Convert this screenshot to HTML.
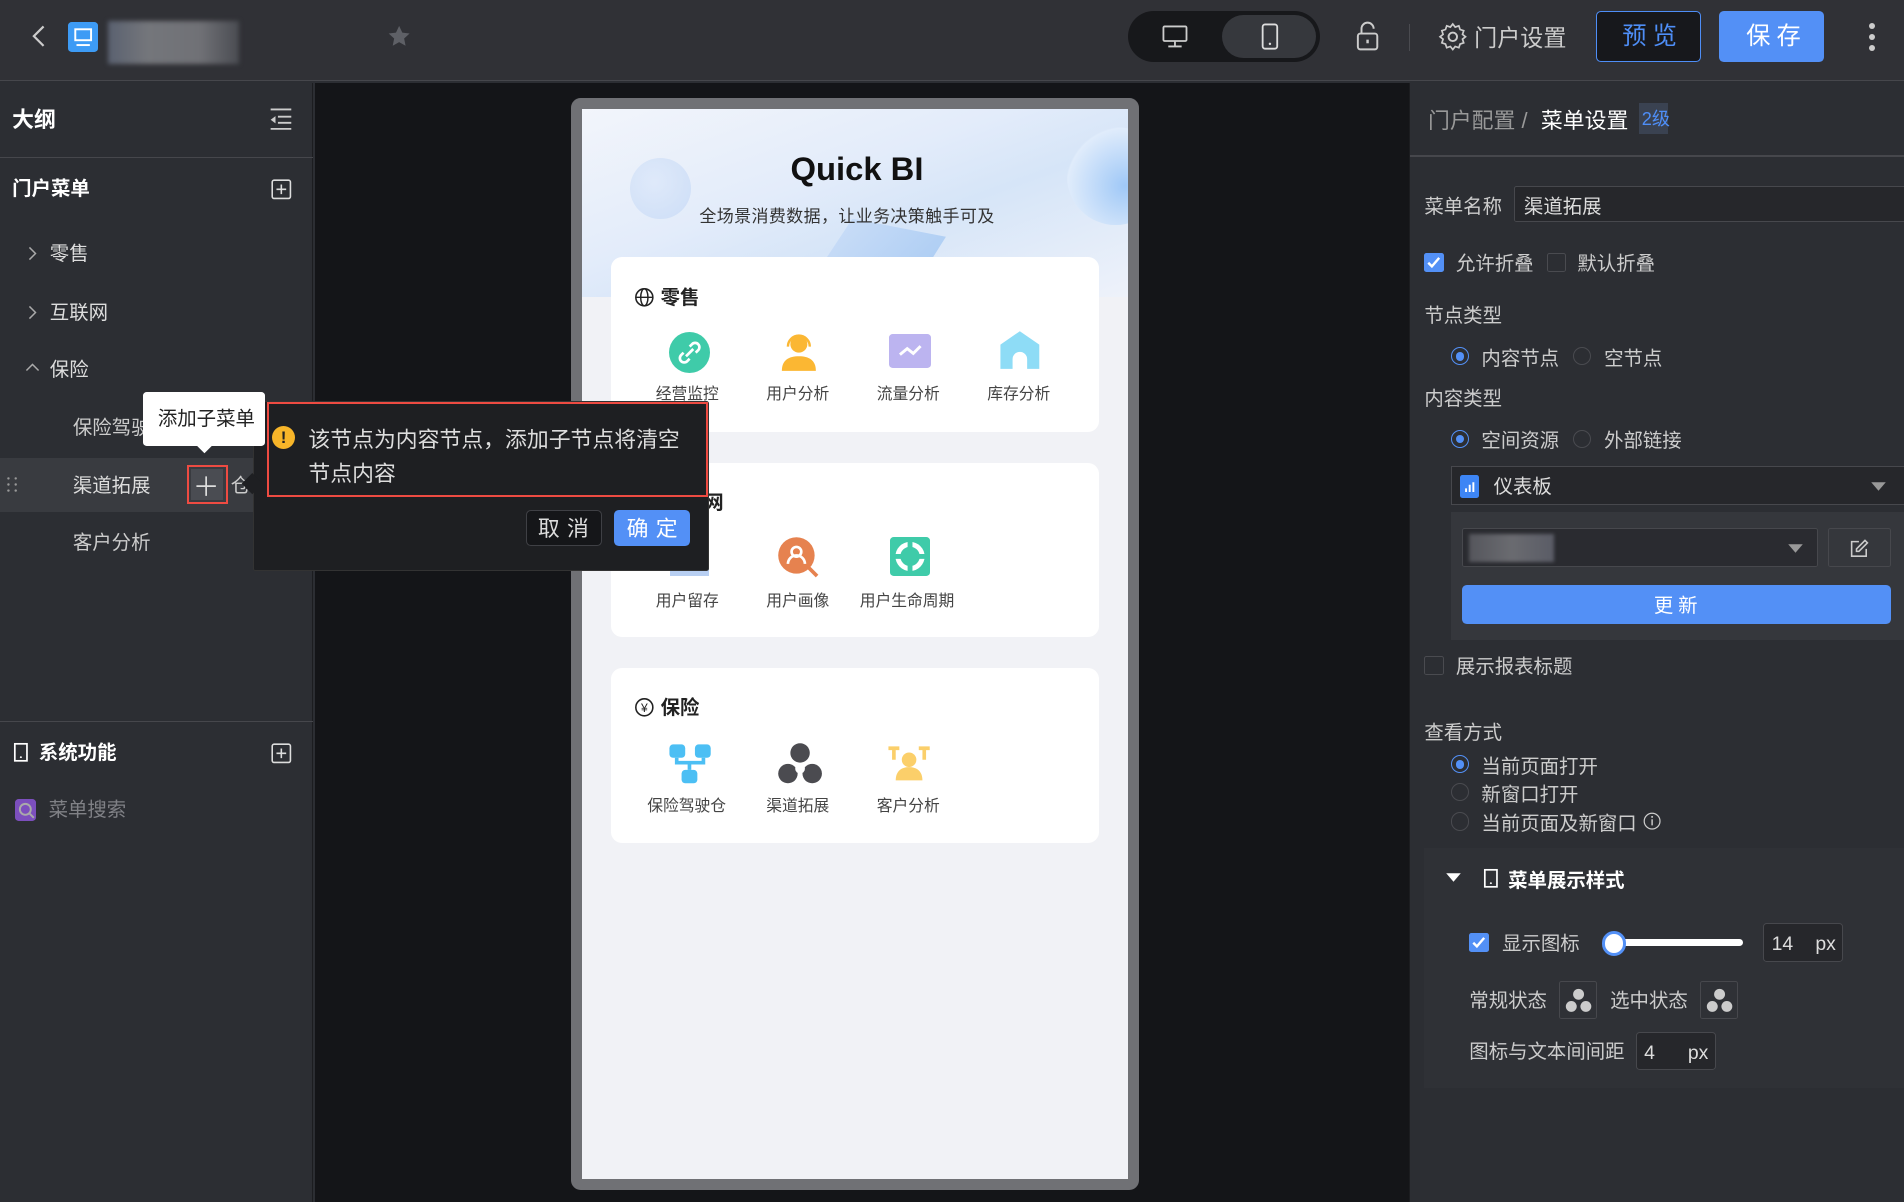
<!DOCTYPE html>
<html><head><meta charset="utf-8"><style>
*{box-sizing:border-box;margin:0;padding:0}
html,body{width:1904px;height:1202px;overflow:hidden;background:#2c2e33}
#r{zoom:1.214286;position:relative;width:1568px;height:990px;font-family:"Liberation Sans","Noto Sans CJK SC",sans-serif;color:#d8d9dc;font-size:15px}
.a{position:absolute}
.t{position:absolute;white-space:nowrap;line-height:1;margin-top:2px}
.ico{position:absolute}
</style></head><body><div id="r">
<!-- top bar -->
<div class="a" style="left:0;top:0;width:1568px;height:67px;background:#303136;border-bottom:1px solid #46474c"></div>
<svg class="ico" style="left:24px;top:20px" width="16" height="20"><path d="M12 2 L4 10 L12 18" stroke="#ccc" stroke-width="1.8" fill="none"/></svg>
<div class="a" style="left:56px;top:18px;width:25px;height:25px;background:#3d9bf5;border-radius:3px"></div>
<svg class="ico" style="left:56px;top:18px" width="25" height="25"><rect x="6" y="6" width="13" height="9" stroke="#fff" stroke-width="1.6" fill="none"/><path d="M7 19H18" stroke="#fff" stroke-width="1.6"/></svg>
<div class="a" style="left:89px;top:17px;width:108px;height:36px;background:linear-gradient(90deg,#5a6170,#74767b 30%,#707176 70%,#4a4c52);filter:blur(2px)"></div>
<svg class="ico" style="left:319px;top:20px" width="20" height="20"><path d="M10 1.5l2.6 5.6 6 .7-4.5 4.1 1.2 6-5.3-3-5.3 3 1.2-6L1.4 7.8l6-.7z" fill="#5e6066"/></svg>
<div class="a" style="left:929px;top:9px;width:158px;height:42px;background:#17181b;border-radius:21px"></div>
<div class="a" style="left:1006px;top:12px;width:78px;height:36px;background:#36383d;border-radius:18px"></div>
<svg class="ico" style="left:956px;top:20px" width="24" height="20"><rect x="2" y="2" width="19" height="12" rx="1" stroke="#ccc" stroke-width="1.5" fill="none"/><path d="M11.5 14v4M6 18.5h11" stroke="#ccc" stroke-width="1.5"/></svg>
<svg class="ico" style="left:1037px;top:18px" width="20" height="24"><rect x="3" y="2" width="12" height="20" rx="2" stroke="#ddd" stroke-width="1.5" fill="none"/><circle cx="9" cy="18" r="1" fill="#ddd"/></svg>
<svg class="ico" style="left:1114px;top:16px" width="24" height="28"><path d="M7 12V8a5 5 0 0 1 10 0" stroke="#ccc" stroke-width="1.6" fill="none"/><rect x="4" y="12" width="16" height="13" rx="2" stroke="#ccc" stroke-width="1.6" fill="none"/><path d="M12 17v3" stroke="#ccc" stroke-width="2"/></svg>
<div class="a" style="left:1160px;top:20px;width:1px;height:22px;background:#4a4b50"></div>
<svg class="ico" style="left:1183px;top:17px" width="26" height="26"><circle cx="13" cy="13" r="3.5" stroke="#ccc" stroke-width="1.6" fill="none"/><path d="M13 2.5l2 2.5 3-1 1 3 3 1-1 3 2.5 2-2.5 2 1 3-3 1-1 3-3-1-2 2.5-2-2.5-3 1-1-3-3-1 1-3L2.5 13 5 11 4 8l3-1 1-3 3 1z" stroke="#ccc" stroke-width="1.4" fill="none"/></svg>
<div class="t" style="left:1214px;top:20px;font-size:19px;color:#ccc">门户设置</div>
<div class="a" style="left:1314px;top:9px;width:87px;height:42px;border:1px solid #4e8ef7;border-radius:4px;background:#17181c"></div>
<div class="t" style="left:1336px;top:19px;font-size:20px;color:#4e8ef7;letter-spacing:5px">预览</div>
<div class="a" style="left:1416px;top:9px;width:86px;height:42px;background:#5390f6;border-radius:4px"></div>
<div class="t" style="left:1438px;top:19px;font-size:20px;color:#fff;letter-spacing:5px">保存</div>
<div class="a" style="left:1539px;top:19px;width:5px;height:5px;border-radius:50%;background:#ccc"></div>
<div class="a" style="left:1539px;top:28px;width:5px;height:5px;border-radius:50%;background:#ccc"></div>
<div class="a" style="left:1539px;top:37px;width:5px;height:5px;border-radius:50%;background:#ccc"></div>

<!-- left panel -->
<div class="a" style="left:0;top:68px;width:258px;height:922px;background:#2c2e33;border-right:1px solid #1c1d20"></div>
<div class="t" style="left:10px;top:88px;font-size:18px;font-weight:bold;color:#fff">大纲</div>
<svg class="ico" style="left:220px;top:88px" width="22" height="20"><path d="M3 2h17M9 8h11M9 13h11M3 18h17" stroke="#ccc" stroke-width="1.5"/><path d="M7 7.5l-4 3 4 3z" fill="#ccc"/></svg>
<div class="a" style="left:0;top:129px;width:258px;height:1px;background:#46474c"></div>
<div class="t" style="left:10px;top:146px;font-size:16px;font-weight:bold;color:#fff">门户菜单</div>
<svg class="ico" style="left:223px;top:147px" width="18" height="18"><rect x="1" y="1" width="15" height="15" rx="1.5" stroke="#ddd" stroke-width="1.3" fill="none"/><path d="M8.5 4.5v8M4.5 8.5h8" stroke="#ddd" stroke-width="1.3"/></svg>
<svg class="ico" style="left:22px;top:202px" width="10" height="14"><path d="M2 2l5 5-5 5" stroke="#aaa" stroke-width="1.2" fill="none"/></svg>
<div class="t" style="left:41px;top:200px;font-size:16px;color:#ddd">零售</div>
<svg class="ico" style="left:22px;top:250px" width="10" height="14"><path d="M2 2l5 5-5 5" stroke="#aaa" stroke-width="1.2" fill="none"/></svg>
<div class="t" style="left:41px;top:248px;font-size:16px;color:#ddd">互联网</div>
<svg class="ico" style="left:20px;top:298px" width="14" height="10"><path d="M2 7l5-5 5 5" stroke="#aaa" stroke-width="1.2" fill="none"/></svg>
<div class="t" style="left:41px;top:295px;font-size:16px;color:#ddd">保险</div>
<div class="t" style="left:60px;top:343px;font-size:16px;color:#ccc">保险驾驶舱</div>
<div class="a" style="left:0;top:377px;width:258px;height:45px;background:#393b40"></div>
<svg class="ico" style="left:5px;top:392px" width="12" height="14"><g fill="#999"><circle cx="2" cy="2" r="1"/><circle cx="8" cy="2" r="1"/><circle cx="2" cy="7" r="1"/><circle cx="8" cy="7" r="1"/><circle cx="2" cy="12" r="1"/><circle cx="8" cy="12" r="1"/></g></svg>
<div class="t" style="left:60px;top:391px;font-size:16px;color:#ddd">渠道拓展</div>
<div class="a" style="left:154px;top:383px;width:34px;height:32px;border:2px solid #ee4b42"></div>
<div class="a" style="left:157px;top:386px;width:27px;height:26px;background:#4a4c52"></div>
<svg class="ico" style="left:160px;top:390px" width="20" height="20"><path d="M10 2v16M2 10h16" stroke="#ddd" stroke-width="1.4"/></svg>
<div class="t" style="left:190px;top:391px;font-size:16px;color:#ccc">仓</div>
<div class="t" style="left:60px;top:438px;font-size:16px;color:#ccc">客户分析</div>
<div class="a" style="left:0;top:594px;width:258px;height:1px;background:#46474c"></div>
<svg class="ico" style="left:11px;top:611px" width="14" height="18"><rect x="1.5" y="1.5" width="10" height="14" stroke="#fff" stroke-width="1.4" fill="none"/><circle cx="6.5" cy="12.5" r=".8" fill="#fff"/></svg>
<div class="t" style="left:32px;top:611px;font-size:16px;font-weight:bold;color:#fff">系统功能</div>
<svg class="ico" style="left:223px;top:612px" width="18" height="18"><rect x="1" y="1" width="15" height="15" rx="1.5" stroke="#ddd" stroke-width="1.3" fill="none"/><path d="M8.5 4.5v8M4.5 8.5h8" stroke="#ddd" stroke-width="1.3"/></svg>
<div class="a" style="left:12px;top:658px;width:18px;height:18px;background:#7c4fbd;border-radius:3px"></div>
<svg class="ico" style="left:12px;top:658px" width="18" height="18"><circle cx="8.5" cy="8.5" r="4.5" stroke="#aaa" stroke-width="1.6" fill="none"/><path d="M12 12l3.5 3.5" stroke="#aaa" stroke-width="1.6"/></svg>
<div class="t" style="left:40px;top:658px;font-size:16px;color:#808186">菜单搜索</div>

<!-- canvas -->
<div class="a" style="left:259px;top:68px;width:901px;height:922px;background:#141518"></div>
<div class="a" style="left:470px;top:81px;width:468px;height:899px;background:#707175;border-radius:8px"></div>
<div class="a" style="left:479px;top:90px;width:450px;height:881px;background:#f1f2f6;overflow:hidden">
 <div class="a" style="left:0;top:0;width:450px;height:155px;background:linear-gradient(160deg,#f2f5fb 0%,#e3ecfa 40%,#d6e5f8 60%,#eef2fa 100%)"></div>
 <div class="a" style="left:40px;top:40px;width:50px;height:50px;border-radius:50%;background:radial-gradient(circle at 40% 40%,#dbe7fa,#c2d7f5);opacity:.7"></div>
 <div class="a" style="left:400px;top:15px;width:80px;height:80px;border-radius:50%;background:radial-gradient(circle at 60% 60%,#9fc8f7,#e0ecfb 70%,transparent 72%)"></div>
 <div class="a" style="left:190px;top:90px;width:110px;height:50px;background:linear-gradient(135deg,#cfe0f8,#a9cbf3);clip-path:polygon(30% 0,100% 30%,80% 100%,0 100%)"></div>
</div>
<div class="t" style="left:651px;top:124px;font-size:27px;font-weight:bold;color:#111">Quick BI</div>
<div class="t" style="left:576px;top:169px;font-size:14px;color:#333;letter-spacing:.3px">全场景消费数据，让业务决策触手可及</div>
<!-- cards -->
<div class="a" style="left:503px;top:212px;width:402px;height:144px;background:#fff;border-radius:9px"></div>
<div class="a" style="left:503px;top:381px;width:402px;height:144px;background:#fff;border-radius:9px"></div>
<div class="a" style="left:503px;top:550px;width:402px;height:144px;background:#fff;border-radius:9px"></div>
<svg class="ico" style="left:522px;top:236px" width="17" height="17"><circle cx="8.5" cy="8.5" r="7" stroke="#222" stroke-width="1.3" fill="none"/><ellipse cx="8.5" cy="8.5" rx="3" ry="7" stroke="#222" stroke-width="1.2" fill="none"/><path d="M1.5 8.5h14" stroke="#222" stroke-width="1.2"/></svg>
<div class="t" style="left:544px;top:236px;font-size:16px;font-weight:bold;color:#222">零售</div>
<svg class="ico" style="left:522px;top:574px" width="17" height="17"><circle cx="8.5" cy="8.5" r="7" stroke="#222" stroke-width="1.3" fill="none"/><text x="8.5" y="12.5" font-size="10" text-anchor="middle" fill="#222" font-family="Liberation Sans">¥</text></svg>
<div class="t" style="left:544px;top:574px;font-size:16px;font-weight:bold;color:#222">保险</div>
<div class="t" style="left:580px;top:405px;font-size:16px;font-weight:bold;color:#222">网</div>
<!-- icons row1 -->
<div class="a" style="left:551px;top:273px;width:34px;height:34px;border-radius:50%;background:#3fcba9"></div>
<svg class="ico" style="left:551px;top:273px" width="34" height="34"><path d="M14 20l6-6M12 17l-2 2a3 3 0 0 0 5 5l2-2M22 17l2-2a3 3 0 0 0-5-5l-2 2" stroke="#fff" stroke-width="2.2" fill="none"/></svg>
<svg class="ico" style="left:640px;top:273px" width="36" height="34"><circle cx="18" cy="10" r="7" fill="#fbb733"/><path d="M4 32c0-9 6-12 14-12s14 3 14 12z" fill="#fbb733"/><path d="M9 12a9 9 0 0 1 18 0" stroke="#fbb733" stroke-width="2" fill="none"/></svg>
<div class="a" style="left:732px;top:275px;width:35px;height:28px;border-radius:3px;background:#bcb4f0"></div>
<svg class="ico" style="left:732px;top:275px" width="35" height="28"><path d="M9 17l6-5 5 4 6-6" stroke="#fff" stroke-width="2.4" fill="none"/></svg>
<svg class="ico" style="left:822px;top:272px" width="36" height="34"><path d="M2 12L18 1l16 11v20H24v-8a6 6 0 0 0-12 0v8H2z" fill="#8edcf6"/></svg>
<div class="t" style="left:540px;top:317px;font-size:13px;color:#444">经营监控</div>
<div class="t" style="left:631px;top:317px;font-size:13px;color:#444">用户分析</div>
<div class="t" style="left:722px;top:317px;font-size:13px;color:#444">流量分析</div>
<div class="t" style="left:813px;top:317px;font-size:13px;color:#444">库存分析</div>
<!-- row2 -->
<div class="a" style="left:552px;top:466px;width:32px;height:8px;background:#b8cff2"></div>
<svg class="ico" style="left:640px;top:441px" width="36" height="36"><circle cx="16" cy="16" r="15" fill="#e6824f"/><circle cx="16" cy="13" r="4" stroke="#fff" stroke-width="2.2" fill="none"/><path d="M9 23a7 7 0 0 1 14 0" stroke="#fff" stroke-width="2.2" fill="none"/><path d="M26 26l7 7" stroke="#e6824f" stroke-width="3"/></svg>
<div class="a" style="left:733px;top:442px;width:33px;height:32px;border-radius:3px;background:#3fcba9"></div>
<svg class="ico" style="left:733px;top:442px" width="33" height="32"><circle cx="16.5" cy="16" r="10" stroke="#fff" stroke-width="4" fill="none"/><path d="M16.5 3v7M16.5 22v7M4 16h7M22 16h7" stroke="#3fcba9" stroke-width="4"/></svg>
<div class="t" style="left:540px;top:487px;font-size:13px;color:#444">用户留存</div>
<div class="t" style="left:631px;top:487px;font-size:13px;color:#444">用户画像</div>
<div class="t" style="left:708px;top:487px;font-size:13px;color:#444">用户生命周期</div>
<!-- row3 -->
<svg class="ico" style="left:549px;top:611px" width="38" height="36"><rect x="2" y="2" width="13" height="11" rx="3" fill="#4cbff4"/><rect x="23" y="2" width="13" height="11" rx="3" fill="#4cbff4"/><rect x="12" y="23" width="13" height="11" rx="3" fill="#4cbff4"/><path d="M8 13v4h22v-4M18.5 17v6" stroke="#4cbff4" stroke-width="3" fill="none"/></svg>
<svg class="ico" style="left:640px;top:611px" width="38" height="36"><circle cx="19" cy="9" r="8" fill="#4b4b50"/><circle cx="9" cy="26" r="8" fill="#4b4b50"/><circle cx="29" cy="26" r="8" fill="#4b4b50"/><circle cx="19" cy="22" r="4" fill="#fff"/></svg>
<svg class="ico" style="left:730px;top:613px" width="38" height="32"><path d="M2 2h9v3H8v8H5V5H2zM27 2h9v3h-3v8h-3V5h-3z" fill="#fbcf6a"/><circle cx="19" cy="13" r="6" fill="#fbcf6a"/><path d="M8 30c0-8 5-11 11-11s11 3 11 11z" fill="#fbcf6a"/></svg>
<div class="t" style="left:533px;top:656px;font-size:13px;color:#444">保险驾驶仓</div>
<div class="t" style="left:631px;top:656px;font-size:13px;color:#444">渠道拓展</div>
<div class="t" style="left:722px;top:656px;font-size:13px;color:#444">客户分析</div>

<!-- popover -->
<div class="a" style="left:208px;top:330px;width:376px;height:140px;background:#1e1f22;border:1px solid #333;border-radius:2px"></div>
<div class="a" style="left:202px;top:392px;width:12px;height:12px;background:#1e1f22;transform:rotate(45deg)"></div>
<div class="a" style="left:220px;top:331px;width:363px;height:78px;border:2px solid #ee4b42"></div>
<div class="a" style="left:224px;top:351px;width:19px;height:19px;border-radius:50%;background:#f7b529"></div>
<div class="t" style="left:224px;top:351px;width:19px;text-align:center;font-size:14px;font-weight:bold;color:#222">!</div>
<div class="t" style="left:254px;top:351px;font-size:18px;color:#ddd">该节点为内容节点，添加子节点将清空</div>
<div class="t" style="left:254px;top:379px;font-size:18px;color:#ddd">节点内容</div>
<div class="a" style="left:433px;top:420px;width:63px;height:30px;border:1px solid #3f4045;border-radius:4px;background:#151619"></div>
<div class="t" style="left:443px;top:425px;font-size:18px;color:#ddd;letter-spacing:6px">取消</div>
<div class="a" style="left:506px;top:420px;width:62px;height:30px;border-radius:4px;background:#5390f6"></div>
<div class="t" style="left:516px;top:425px;font-size:18px;color:#fff;letter-spacing:6px">确定</div>
<!-- tooltip -->
<div class="a" style="left:118px;top:323px;width:100px;height:44px;background:#fff;border-radius:3px"></div>
<div class="a" style="left:164px;top:362px;width:9px;height:9px;background:#fff;transform:rotate(45deg)"></div>
<div class="t" style="left:130px;top:336px;font-size:16px;color:#222">添加子菜单</div>

<!-- right panel -->
<div class="a" style="left:1160px;top:68px;width:408px;height:922px;background:#2c2e33;border-left:1px solid #1c1d20"></div>
<div class="t" style="left:1176px;top:89px;font-size:18px;color:#999">门户配置 /</div>
<div class="t" style="left:1269px;top:89px;font-size:18px;color:#fff">菜单设置</div>
<div class="a" style="left:1350px;top:85px;width:24px;height:25px;background:#3a4251"></div>
<div class="t" style="left:1352px;top:89px;font-size:15px;color:#4e8ef7">2级</div>
<div class="a" style="left:1161px;top:128px;width:407px;height:1px;background:#46474c"></div>
<div class="t" style="left:1173px;top:161px;font-size:16px;color:#ccc">菜单名称</div>
<div class="a" style="left:1247px;top:153px;width:325px;height:30px;border:1px solid #47484d;border-radius:2px;background:#26272b"></div>
<div class="t" style="left:1255px;top:161px;font-size:16px;color:#ddd">渠道拓展</div>
<div class="a" style="left:1173px;top:208px;width:16px;height:16px;border-radius:2px;background:#5390f6"></div>
<svg class="ico" style="left:1173px;top:208px" width="16" height="16"><path d="M3.5 8l3 3 6-7" stroke="#fff" stroke-width="2" fill="none"/></svg>
<div class="t" style="left:1199px;top:208px;font-size:16px;color:#ccc">允许折叠</div>
<div class="a" style="left:1274px;top:208px;width:16px;height:16px;border-radius:2px;border:1px solid #4a4b50"></div>
<div class="t" style="left:1299px;top:208px;font-size:16px;color:#ccc">默认折叠</div>
<div class="t" style="left:1173px;top:251px;font-size:16px;color:#ccc">节点类型</div>
<div class="a" style="left:1195px;top:286px;width:15px;height:15px;border-radius:50%;border:1.5px solid #5390f6"></div>
<div class="a" style="left:1199px;top:290px;width:7px;height:7px;border-radius:50%;background:#5390f6"></div>
<div class="t" style="left:1220px;top:286px;font-size:16px;color:#ccc">内容节点</div>
<div class="a" style="left:1295px;top:286px;width:15px;height:15px;border-radius:50%;border:1px solid #4a4b50"></div>
<div class="t" style="left:1321px;top:286px;font-size:16px;color:#ccc">空节点</div>
<div class="t" style="left:1173px;top:319px;font-size:16px;color:#ccc">内容类型</div>
<div class="a" style="left:1195px;top:354px;width:15px;height:15px;border-radius:50%;border:1.5px solid #5390f6"></div>
<div class="a" style="left:1199px;top:358px;width:7px;height:7px;border-radius:50%;background:#5390f6"></div>
<div class="t" style="left:1220px;top:354px;font-size:16px;color:#ccc">空间资源</div>
<div class="a" style="left:1295px;top:354px;width:15px;height:15px;border-radius:50%;border:1px solid #4a4b50"></div>
<div class="t" style="left:1321px;top:354px;font-size:16px;color:#ccc">外部链接</div>
<div class="a" style="left:1195px;top:384px;width:375px;height:32px;border:1px solid #47484d;background:#26272b"></div>
<div class="a" style="left:1202px;top:391px;width:16px;height:19px;border-radius:2px;background:#3d85f5"></div>
<svg class="ico" style="left:1202px;top:391px" width="16" height="19"><path d="M5 14v-3M8 14V8M11 14V6" stroke="#fff" stroke-width="1.6"/></svg>
<div class="t" style="left:1230px;top:392px;font-size:16px;color:#ddd">仪表板</div>
<svg class="ico" style="left:1540px;top:396px" width="14" height="10"><path d="M1 1h12L7 8z" fill="#999"/></svg>
<div class="a" style="left:1195px;top:422px;width:373px;height:105px;background:#35373c"></div>
<div class="a" style="left:1204px;top:435px;width:293px;height:32px;border:1px solid #47484d;border-radius:2px;background:#2a2b30"></div>
<div class="a" style="left:1210px;top:440px;width:70px;height:23px;background:linear-gradient(90deg,#55565c,#6a6b70,#5a5c66);filter:blur(1.5px)"></div>
<svg class="ico" style="left:1472px;top:447px" width="14" height="10"><path d="M1 1h12L7 8z" fill="#999"/></svg>
<div class="a" style="left:1505px;top:435px;width:52px;height:32px;border:1px solid #47484d;border-radius:2px"></div>
<svg class="ico" style="left:1522px;top:443px" width="18" height="18"><path d="M9 3H3v12h12V9" stroke="#ccc" stroke-width="1.3" fill="none"/><path d="M14 2l2 2-7 7H7V9z" stroke="#ccc" stroke-width="1.3" fill="none"/></svg>
<div class="a" style="left:1204px;top:482px;width:353px;height:32px;border-radius:4px;background:#5390f6"></div>
<div class="t" style="left:1362px;top:490px;font-size:16px;color:#fff;letter-spacing:4px">更新</div>
<div class="a" style="left:1173px;top:540px;width:16px;height:16px;border-radius:2px;border:1px solid #4a4b50"></div>
<div class="t" style="left:1199px;top:540px;font-size:16px;color:#ccc">展示报表标题</div>
<div class="t" style="left:1173px;top:594px;font-size:16px;color:#ccc">查看方式</div>
<div class="a" style="left:1195px;top:622px;width:15px;height:15px;border-radius:50%;border:1.5px solid #5390f6"></div>
<div class="a" style="left:1199px;top:626px;width:7px;height:7px;border-radius:50%;background:#5390f6"></div>
<div class="t" style="left:1220px;top:622px;font-size:16px;color:#ccc">当前页面打开</div>
<div class="a" style="left:1195px;top:645px;width:15px;height:15px;border-radius:50%;border:1px solid #4a4b50"></div>
<div class="t" style="left:1220px;top:645px;font-size:16px;color:#ccc">新窗口打开</div>
<div class="a" style="left:1195px;top:669px;width:15px;height:15px;border-radius:50%;border:1px solid #4a4b50"></div>
<div class="t" style="left:1220px;top:669px;font-size:16px;color:#ccc">当前页面及新窗口</div>
<svg class="ico" style="left:1353px;top:669px" width="15" height="15"><circle cx="7.5" cy="7.5" r="6.5" stroke="#ccc" stroke-width="1" fill="none"/><path d="M7.5 6v5" stroke="#ccc" stroke-width="1.2"/><circle cx="7.5" cy="4" r=".8" fill="#ccc"/></svg>
<div class="a" style="left:1173px;top:698px;width:395px;height:198px;background:#2f3136"></div>
<svg class="ico" style="left:1190px;top:718px" width="14" height="10"><path d="M1 1h12L7 8z" fill="#fff"/></svg>
<svg class="ico" style="left:1221px;top:715px" width="14" height="18"><rect x="1.5" y="1.5" width="10" height="14" stroke="#fff" stroke-width="1.4" fill="none"/><circle cx="6.5" cy="12.5" r=".8" fill="#fff"/></svg>
<div class="t" style="left:1242px;top:716px;font-size:16px;font-weight:bold;color:#fff">菜单展示样式</div>
<div class="a" style="left:1210px;top:768px;width:16px;height:16px;border-radius:2px;background:#5390f6"></div>
<svg class="ico" style="left:1210px;top:768px" width="16" height="16"><path d="M3.5 8l3 3 6-7" stroke="#fff" stroke-width="2" fill="none"/></svg>
<div class="t" style="left:1237px;top:768px;font-size:16px;color:#ccc">显示图标</div>
<div class="a" style="left:1323px;top:773px;width:112px;height:6px;border-radius:3px;background:#fff"></div>
<div class="a" style="left:1319px;top:767px;width:20px;height:20px;border-radius:50%;background:#fff;border:3px solid #5390f6"></div>
<div class="a" style="left:1452px;top:760px;width:66px;height:32px;border:1px solid #47484d;border-radius:3px;background:#26272b"></div>
<div class="t" style="left:1459px;top:768px;font-size:16px;color:#ddd">14</div>
<div class="t" style="left:1495px;top:768px;font-size:16px;color:#ddd">px</div>
<div class="t" style="left:1210px;top:815px;font-size:16px;color:#ccc">常规状态</div>
<div class="a" style="left:1284px;top:808px;width:31px;height:31px;border:1px solid #47484d;border-radius:2px"></div>
<svg class="ico" style="left:1288px;top:813px" width="24" height="22"><circle cx="12" cy="6" r="4.5" fill="#ccc"/><circle cx="6" cy="16" r="4.5" fill="#ccc"/><circle cx="18" cy="16" r="4.5" fill="#ccc"/><circle cx="12" cy="13" r="2.2" fill="#2f3136"/></svg>
<div class="t" style="left:1326px;top:815px;font-size:16px;color:#ccc">选中状态</div>
<div class="a" style="left:1400px;top:808px;width:31px;height:31px;border:1px solid #47484d;border-radius:2px"></div>
<svg class="ico" style="left:1404px;top:813px" width="24" height="22"><circle cx="12" cy="6" r="4.5" fill="#ccc"/><circle cx="6" cy="16" r="4.5" fill="#ccc"/><circle cx="18" cy="16" r="4.5" fill="#ccc"/><circle cx="12" cy="13" r="2.2" fill="#2f3136"/></svg>
<div class="t" style="left:1210px;top:857px;font-size:16px;color:#ccc">图标与文本间间距</div>
<div class="a" style="left:1347px;top:850px;width:66px;height:31px;border:1px solid #47484d;border-radius:3px;background:#26272b"></div>
<div class="t" style="left:1354px;top:858px;font-size:16px;color:#ddd">4</div>
<div class="t" style="left:1390px;top:858px;font-size:16px;color:#ddd">px</div>
</div></body></html>
